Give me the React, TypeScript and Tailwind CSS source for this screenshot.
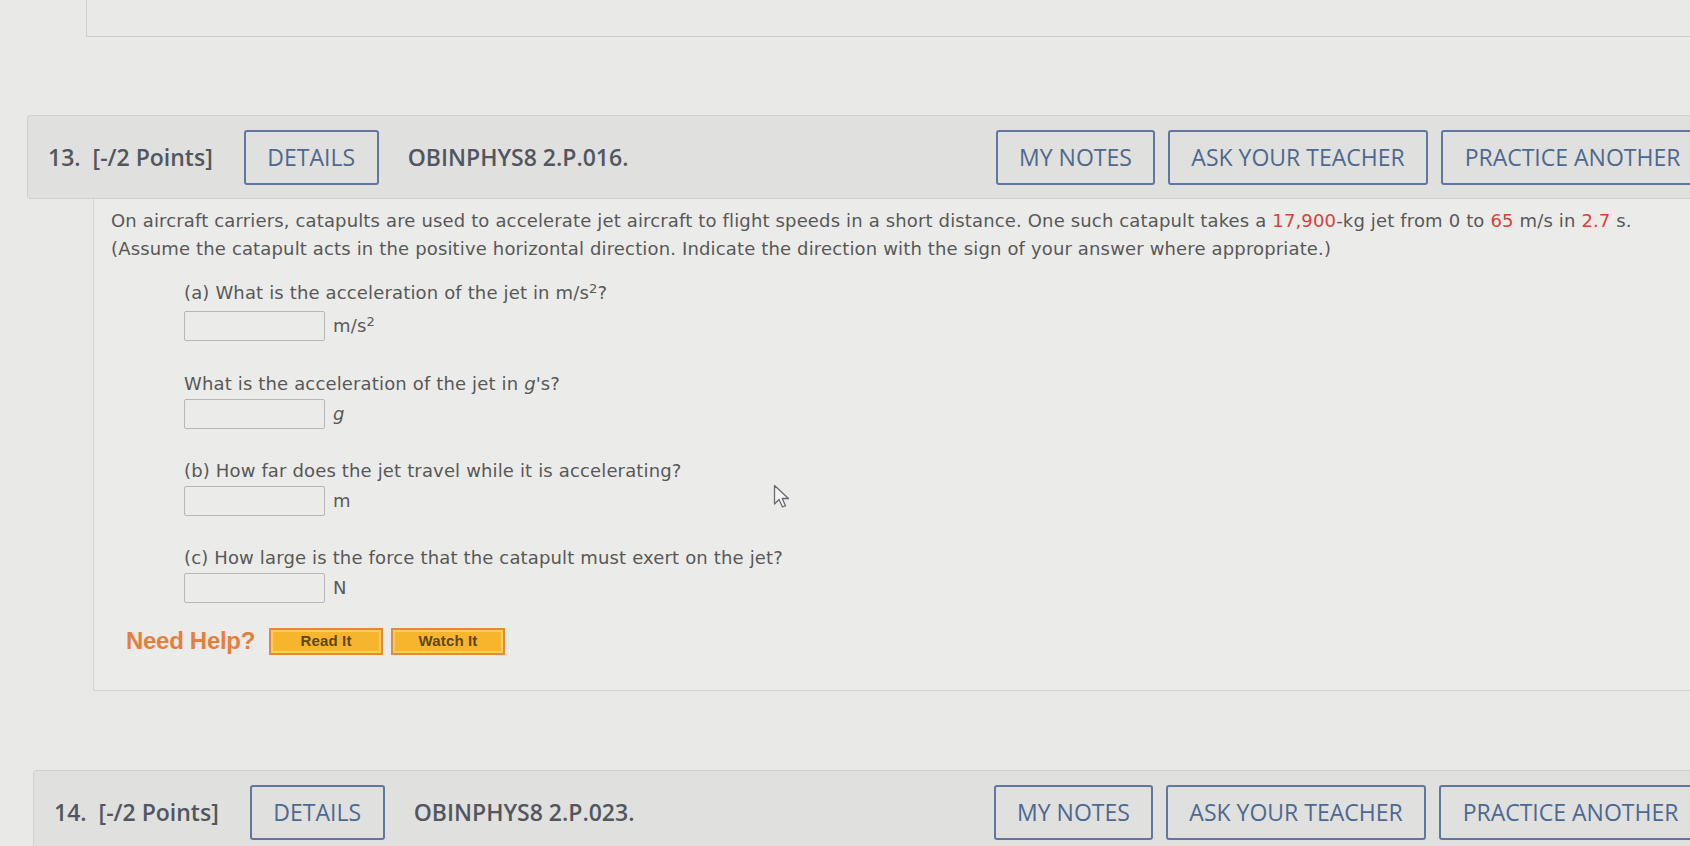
import React from 'react'

const font = { fontFamily: '"Open Sans", "Noto Sans", sans-serif' }
const verdana = { fontFamily: '"DejaVu Sans", Verdana, sans-serif' }
const arial = { fontFamily: '"Liberation Sans", Arial, sans-serif' }

function OutlineButton({ label, w }: { label: string; w: string }) {
  return (
    <div
      className={`h-[55px] ${w} flex items-center justify-center rounded-[3px] border-2 border-[#6077a3] text-[23px] text-[#4d6891] shrink-0`}
    >
      {label}
    </div>
  )
}

function QuestionHeader({ num, code, ml, w }: { num: number; code: string; ml: string; w: string }) {
  return (
    <div className={`${ml} ${w} h-[84px] pr-[12px] flex items-center bg-[#e0e0de] border border-[#d0d0ce] rounded-[3px]`}>
      <span className="ml-[20px] text-[23px] font-semibold text-[#525660]">
        {num}.&nbsp;&nbsp;[-/2 Points]
      </span>
      <div className="ml-[31px]">
        <OutlineButton label="DETAILS" w="w-[135px]" />
      </div>
      <span className="ml-[29px] text-[23px] font-semibold text-[#525660]">{code}</span>
      <div className="ml-auto flex gap-[13px]">
        <OutlineButton label="MY NOTES" w="w-[159px]" />
        <OutlineButton label="ASK YOUR TEACHER" w="w-[260px]" />
        <OutlineButton label="PRACTICE ANOTHER" w="w-[263px]" />
      </div>
    </div>
  )
}

function Answer({ unit, mt }: { unit: React.ReactNode; mt: string }) {
  return (
    <div className={`${mt} flex items-center h-[30px]`}>
      <div className="w-[141px] h-[30px] border border-[#b7b7b6] rounded-[2px] bg-[#ebebe9]" />
      <span className="ml-[8px] text-[18px] leading-[30px] text-[#5a5a5a]">{unit}</span>
    </div>
  )
}

function HelpButton({ label }: { label: string }) {
  return (
    <div className="w-[114px] h-[27px] border-2 border-[#e4883a] bg-[#f7b52e] shadow-[inset_0_0_0_2px_#fbcf5c] flex items-center justify-center">
      <span className="text-[15px] font-bold text-[#5e4716]" style={arial}>
        {label}
      </span>
    </div>
  )
}

const red = 'text-[#d9403d]'

export default function App() {
  return (
    <div className="relative w-full h-[846px] overflow-hidden bg-[#e9e9e7]" style={font}>
      {/* previous question, cut off */}
      <div className="ml-[86px] h-[37px] border-l border-b border-[#cfcfcd]" />

      <div className="mt-[78px]">
        <QuestionHeader num={13} code="OBINPHYS8 2.P.016." ml="ml-[27px]" w="w-[1690px]" />

        <div
          className="ml-[93px] h-[492px] border-l border-b border-[#d2d2d0] bg-[#ebebe9] pt-[8px] text-[18px] leading-[28px] tracking-[0.15px] text-[#585858]"
          style={verdana}
        >
          <div className="pl-[17px]">
            <p>
              On aircraft carriers, catapults are used to accelerate jet aircraft to flight speeds in a short
              distance. One such catapult takes a <span className={red}>17,900</span>-kg jet from 0 to{' '}
              <span className={red}>65</span> m/s in <span className={red}>2.7</span> s.
            </p>
            <p>
              (Assume the catapult acts in the positive horizontal direction. Indicate the direction with the sign
              of your answer where appropriate.)
            </p>
          </div>

          <div className="pl-[90px]">
            <div className="mt-[16px] h-[28px]">
              (a) What is the acceleration of the jet in m/s<sup className="text-[13px]">2</sup>?
            </div>
            <Answer
              mt="mt-[4px]"
              unit={
                <>
                  m/s<sup className="text-[13px]">2</sup>
                </>
              }
            />

            <div className="mt-[29px] h-[28px]">
              What is the acceleration of the jet in <i>g</i>'s?
            </div>
            <Answer mt="mt-[1px]" unit={<i>g</i>} />

            <div className="mt-[28px] h-[28px]">(b) How far does the jet travel while it is accelerating?</div>
            <Answer mt="mt-[1px]" unit="m" />

            <div className="mt-[28px] h-[28px]">(c) How large is the force that the catapult must exert on the jet?</div>
            <Answer mt="mt-[1px]" unit="N" />
          </div>

          <div className="mt-[24px] pl-[32px] flex items-center gap-[14px]">
            <span className="text-[24px] leading-[28px] font-bold text-[#e4803e] tracking-[-0.3px]" style={arial}>
              Need Help?
            </span>
            <div className="flex gap-[8px]">
              <HelpButton label="Read It" />
              <HelpButton label="Watch It" />
            </div>
          </div>
        </div>
      </div>

      <div className="mt-[79px]">
        <QuestionHeader num={14} code="OBINPHYS8 2.P.023." ml="ml-[33px]" w="w-[1682px]" />
      </div>

      {/* mouse pointer */}
      <svg className="absolute left-[773px] top-[484px]" width="20" height="26" viewBox="0 0 20 26">
        <path
          d="M1.5 1.5 L1.5 20 L6 15.5 L9.5 23 L12.5 21.7 L9.2 14.5 L15.5 14.5 Z"
          fill="#f4f4f4"
          stroke="#6a6a70"
          strokeWidth="1.3"
          strokeLinejoin="round"
        />
      </svg>
    </div>
  )
}
